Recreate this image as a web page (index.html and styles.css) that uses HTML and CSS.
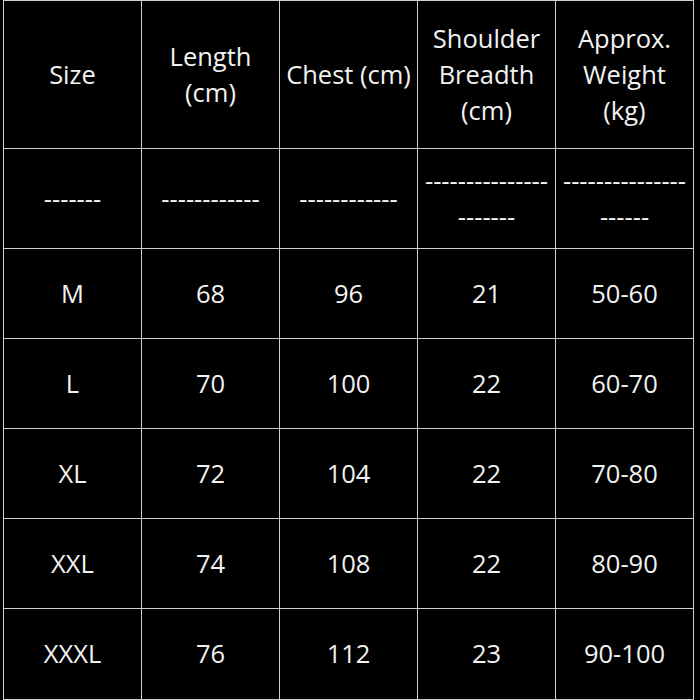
FILE: index.html
```html
<!DOCTYPE html>
<html lang="en">
<head>
<meta charset="utf-8">
<title>Size Chart</title>
<link rel="stylesheet" href="styles.css">
</head>
<body>
<div class="chart">
  <div class="cell head">Size</div>
  <div class="cell head">Length<br>(cm)</div>
  <div class="cell head">Chest (cm)</div>
  <div class="cell head">Shoulder<br>Breadth<br>(cm)</div>
  <div class="cell head">Approx.<br>Weight<br>(kg)</div>

  <div class="cell sep">-------</div>
  <div class="cell sep">------------</div>
  <div class="cell sep">------------</div>
  <div class="cell sep">---------------<br>-------</div>
  <div class="cell sep">---------------<br>------</div>

  <div class="cell">M</div><div class="cell">68</div><div class="cell">96</div><div class="cell">21</div><div class="cell">50-60</div>
  <div class="cell">L</div><div class="cell">70</div><div class="cell">100</div><div class="cell">22</div><div class="cell">60-70</div>
  <div class="cell">XL</div><div class="cell">72</div><div class="cell">104</div><div class="cell">22</div><div class="cell">70-80</div>
  <div class="cell">XXL</div><div class="cell">74</div><div class="cell">108</div><div class="cell">22</div><div class="cell">80-90</div>
  <div class="cell last">XXXL</div><div class="cell last">76</div><div class="cell last">112</div><div class="cell last">23</div><div class="cell last">90-100</div>
</div>
</body>
</html>
```
FILE: styles.css
```css
html, body {
  margin: 0;
  padding: 0;
  background: #000;
}
body {
  width: 700px;
  height: 700px;
  overflow: hidden;
  font-family: "Open Sans", "Noto Sans", sans-serif;
  color: #f2f2f2;
}
.chart {
  margin-left: 3px;
  display: grid;
  grid-template-columns: repeat(5, 138px);
  grid-template-rows: 148px 100px 90px 90px 90px 90px 91px;
  border-left: 1px solid #cfcfcf;
  border-top: 1px solid #cfcfcf;
  width: max-content;
}
.cell {
  box-sizing: border-box;
  border-right: 1px solid #cfcfcf;
  border-bottom: 1px solid #cfcfcf;
  display: flex;
  align-items: center;
  justify-content: center;
  text-align: center;
  font-size: 25.5px;
  line-height: 36px;
  padding: 0 0 2px;
  white-space: nowrap;
}
```
